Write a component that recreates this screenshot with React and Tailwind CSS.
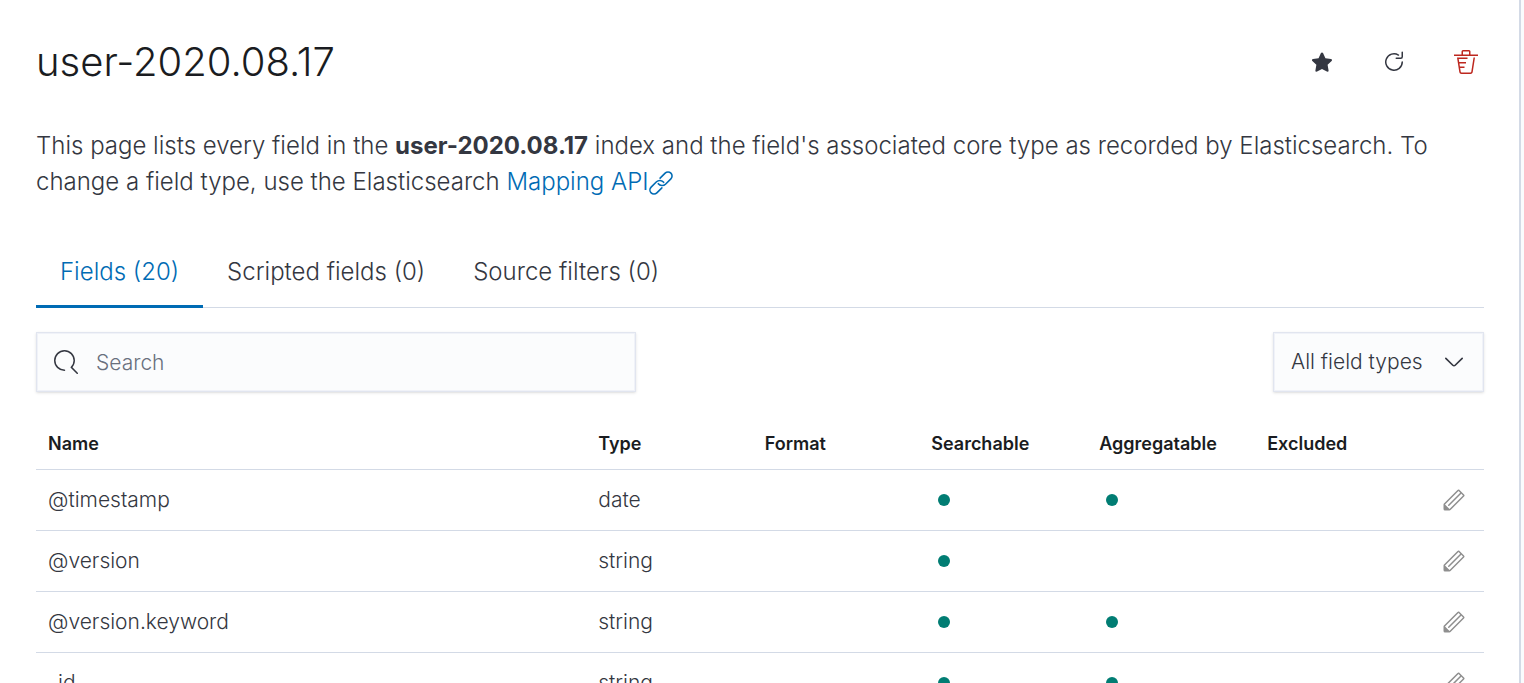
import { useState } from "react";

const fields = [
  { name: "@timestamp", type: "date", searchable: true, aggregatable: true },
  { name: "@version", type: "string", searchable: true, aggregatable: false },
  { name: "@version.keyword", type: "string", searchable: true, aggregatable: true },
  { name: "_id", type: "string", searchable: true, aggregatable: true },
];

const tabs = ["Fields (20)", "Scripted fields (0)", "Source filters (0)"];

const icons = {
  star: "M8 1.6c.3 0 .55.17.68.45l1.6 3.4 3.7.5c.65.1.9.85.45 1.3l-2.7 2.65.65 3.7c.1.65-.55 1.1-1.1.8L8 12.7l-3.3 1.7c-.55.3-1.2-.15-1.1-.8l.65-3.7-2.7-2.65c-.45-.45-.2-1.2.45-1.3l3.7-.5 1.6-3.4c.13-.28.4-.45.7-.45z",
  refresh:
    "M11.228 2.942a.5.5 0 11-.538.842A5 5 0 1013 8a.5.5 0 111 0 6 6 0 11-2.772-5.058zM14 1.5v3A1.5 1.5 0 0112.5 6h-3a.5.5 0 010-1h3a.5.5 0 00.5-.5v-3a.5.5 0 111 0z",
  trash:
    "M11 3h5v1H0V3h5V1a1 1 0 011-1h4a1 1 0 011 1v2zm-7.056 8H7v1H4.1l.392 2.519c.042.269.254.458.493.458h6.03c.239 0 .451-.189.493-.458l1.498-9.576H14l-1.504 9.73c-.116.747-.74 1.304-1.481 1.304h-6.03c-.741 0-1.365-.557-1.481-1.304l-1.511-9.73H9V5.95H3.157L3.476 8H8v1H3.632l.312 2zM6 3h4V1H6v2z",
  search:
    "M11.271 11.978l3.872 3.873a.502.502 0 00.708 0 .502.502 0 000-.708l-3.565-3.564c2.38-2.747 2.267-6.923-.342-9.532-2.73-2.73-7.17-2.73-9.898 0-2.728 2.729-2.728 7.17 0 9.9a6.955 6.955 0 004.949 2.05.5.5 0 000-1 5.96 5.96 0 01-4.242-1.757 6.01 6.01 0 010-8.486 6.004 6.004 0 018.484 0 6.01 6.01 0 010 8.486.5.5 0 000 .738z",
  arrowDown:
    "M13.069 5.157L8.384 9.768a.546.546 0 01-.768 0L2.93 5.158a.552.552 0 00-.771 0 .53.53 0 000 .759l4.684 4.61c.641.631 1.672.63 2.312 0l4.684-4.61a.53.53 0 000-.76.552.552 0 00-.771 0z",
  pencil:
    "M12.148 3.148L11 2l-9 9v3h3l9-9-1.144-1.144-8.002 7.998a.502.502 0 01-.708 0 .502.502 0 010-.708l8.002-7.998zM11 1c.256 0 .512.098.707.293l3 3a.999.999 0 010 1.414l-9 9A.997.997 0 015 15H2a1 1 0 01-1-1v-3c0-.265.105-.52.293-.707l9-9A.997.997 0 0111 1zM5 14H2v-3l3 3z",
};

const Icon = ({ name, className }) => (
  <svg viewBox="0 0 16 16" fill="currentColor" aria-hidden="true" className={`size-6 ${className || ""}`}>
    <path d={icons[name]} />
  </svg>
);

const LinkIcon = () => (
  <svg
    viewBox="1.3 1.3 21.4 21.4"
    fill="none"
    stroke="currentColor"
    strokeWidth="1.4"
    strokeLinecap="round"
    aria-hidden="true"
    className="inline-block size-6 align-middle"
  >
    <path d="M9.6 12.6a4.3 4.3 0 0 0 6.4.5l4.8-4.8a3.6 3.6 0 0 0-5.1-5.1l-4.5 4.5" />
    <path d="M14.4 11.4a4.3 4.3 0 0 0-6.4-.5l-4.8 4.8a3.6 3.6 0 0 0 5.1 5.1l4.5-4.5" />
  </svg>
);

const Dot = ({ label }) => (
  <span role="img" aria-label={label} className="ml-[7px] block size-3 rounded-full bg-[#017d73]" />
);

const App = () => {
  const [tab, setTab] = useState(tabs[0]);

  return (
    <div className="h-screen overflow-hidden bg-[#fafbfd] pr-[3px] font-['Inter',sans-serif] font-light text-[#343741]">
      <main className="min-h-full border-r-2 border-[#d3dae6] bg-white pt-8 pr-[35px] pl-9">
        <header className="flex items-center justify-between">
          <h1 className="text-[40px] leading-[60px] text-[#1a1c21]">user-2020.08.17</h1>
          <div className="flex gap-6">
            <button aria-label="Set as default index" className="flex size-12 items-center justify-center">
              <Icon name="star" />
            </button>
            <button aria-label="Refresh field list" className="flex size-12 items-center justify-center">
              <Icon name="refresh" />
            </button>
            <button aria-label="Remove index pattern" className="-mr-1.5 flex size-12 items-center justify-center text-[#bd271e]">
              <Icon name="trash" />
            </button>
          </div>
        </header>

        <p className="mt-9 text-2xl leading-9">
          This page lists every field in the <strong className="font-bold">user-2020.08.17</strong> index and the
          field's associated core type as recorded by Elasticsearch. To change a field type, use the Elasticsearch{" "}
          <a href="#mapping" className="whitespace-nowrap text-[#006bb4]">
            Mapping API
            <LinkIcon />
          </a>
        </p>

        <div role="tablist" className="mt-9 flex border-b border-[#d3dae6]">
          {tabs.map((t) => (
            <button
              key={t}
              role="tab"
              aria-selected={t === tab}
              onClick={() => setTab(t)}
              className={`-mb-px border-b-3 px-6 pt-[18px] pb-[15px] text-2xl leading-9 ${
                t === tab ? "border-[#006bb4] text-[#006bb4]" : "border-transparent"
              }`}
            >
              {t}
            </button>
          ))}
        </div>

        <div className="mt-6 flex items-center justify-between">
          <label className="flex h-15 w-150 items-center gap-[18px] border border-[#e1e5ef] bg-[#fbfcfd] px-[17px] shadow-sm inset-ring inset-ring-[#f0f2f8]">
            <Icon name="search" className="shrink-0" />
            <input
              type="search"
              aria-label="Search"
              placeholder="Search"
              className="min-w-0 flex-1 bg-transparent pt-0.5 text-[21px] outline-none placeholder:text-[#69707d]"
            />
          </label>
          <div className="grid items-center">
            <select
              aria-label="Field type"
              className="col-start-1 row-start-1 h-15 appearance-none border border-[#e1e5ef] bg-[#fbfcfd] pr-15 pl-[17px] text-[21px] shadow-sm inset-ring inset-ring-[#f0f2f8] outline-none"
            >
              <option>All field types</option>
              <option>date</option>
              <option>string</option>
            </select>
            <Icon name="arrowDown" className="pointer-events-none col-start-1 row-start-1 mr-[18px] justify-self-end" />
          </div>
        </div>

        <table className="mt-[26px] w-full table-fixed text-left text-[21px] leading-9">
          <colgroup>
            <col className="w-[38%]" />
            <col className="w-[11.5%]" />
            <col className="w-[11.5%]" />
            <col className="w-[11.6%]" />
            <col className="w-[11.6%]" />
            <col />
            <col className="w-15" />
          </colgroup>
          <thead>
            <tr className="border-b border-[#d3dae6] text-lg leading-7 text-[#1a1c21]">
              <th className="px-3 pt-3 pb-[11px] font-semibold">Name</th>
              <th className="px-3 font-semibold">Type</th>
              <th className="px-3 font-semibold">Format</th>
              <th className="px-3 font-semibold">Searchable</th>
              <th className="px-3 font-semibold">Aggregatable</th>
              <th className="px-3 font-semibold">Excluded</th>
              <th></th>
            </tr>
          </thead>
          <tbody>
            {fields.map((field) => (
              <tr key={field.name} className="border-b border-[#d3dae6]">
                <td className="px-3 py-3">{field.name}</td>
                <td className="px-3">{field.type}</td>
                <td></td>
                <td className="px-3">{field.searchable && <Dot label="Searchable" />}</td>
                <td className="px-3">{field.aggregatable && <Dot label="Aggregatable" />}</td>
                <td></td>
                <td>
                  <button aria-label={`Edit ${field.name}`} className="ml-auto mr-[18px] block text-[#8f8f8f]">
                    <Icon name="pencil" />
                  </button>
                </td>
              </tr>
            ))}
          </tbody>
        </table>
      </main>
    </div>
  );
};

export default App;
